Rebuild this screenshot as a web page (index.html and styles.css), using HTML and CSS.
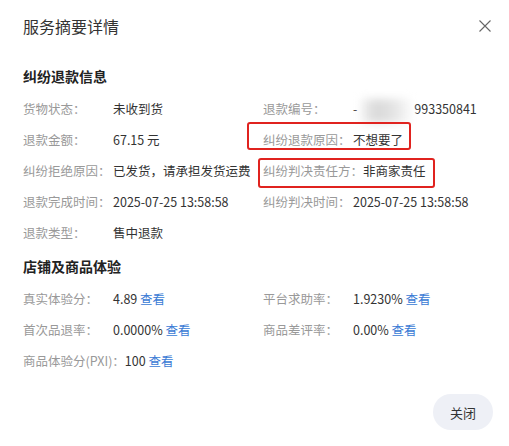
FILE: index.html
```html
<!DOCTYPE html>
<html lang="zh-CN">
<head>
  <meta charset="UTF-8">
  <title>服务摘要详情</title>
  <link rel="stylesheet" href="styles.css">
</head>
<body>
  <div class="dialog">
    <div class="dialog-header">
      <span class="dialog-title">服务摘要详情</span>
      <svg class="close-x" width="12" height="12" viewBox="0 0 12 12">
        <path d="M0.5 0.5 L11.5 11.5 M11.5 0.5 L0.5 11.5" stroke="#666" stroke-width="1.1" fill="none"/>
      </svg>
    </div>

    <h3 class="section-title first">纠纷退款信息</h3>
    <div class="info-grid">
      <div class="item"><span class="label">货物状态：</span><span class="value">未收到货</span></div>
      <div class="item"><span class="label">退款编号：</span><span class="value">-<span class="blur"></span>993350841</span></div>
      <div class="item"><span class="label">退款金额：</span><span class="value">67.15 元</span></div>
      <div class="item"><span class="mark mark-reason"></span><span class="label">纠纷退款原因：</span><span class="value">不想要了</span></div>
      <div class="item"><span class="label">纠纷拒绝原因：</span><span class="value">已发货，请承担发货运费</span></div>
      <div class="item"><span class="mark mark-duty"></span><span class="label">纠纷判决责任方：</span><span class="value">非商家责任</span></div>
      <div class="item"><span class="label">退款完成时间：</span><span class="value">2025-07-25 13:58:58</span></div>
      <div class="item"><span class="label">纠纷判决时间：</span><span class="value">2025-07-25 13:58:58</span></div>
      <div class="item"><span class="label">退款类型：</span><span class="value">售中退款</span></div>
    </div>

    <h3 class="section-title">店铺及商品体验</h3>
    <div class="info-grid">
      <div class="item"><span class="label">真实体验分：</span><span class="value">4.89 <a class="link">查看</a></span></div>
      <div class="item"><span class="label">平台求助率：</span><span class="value">1.9230% <a class="link">查看</a></span></div>
      <div class="item"><span class="label">首次品退率：</span><span class="value">0.0000% <a class="link">查看</a></span></div>
      <div class="item"><span class="label">商品差评率：</span><span class="value">0.00% <a class="link">查看</a></span></div>
      <div class="item"><span class="label">商品体验分(PXI)：</span><span class="value">100 <a class="link">查看</a></span></div>
    </div>

    <div class="dialog-footer">
      <button class="btn-close">关闭</button>
    </div>
  </div>
</body>
</html>
```

FILE: styles.css
```css
body {
  margin: 0;
  background: #fff;
  font-family: "Noto Sans CJK SC", "Liberation Sans", sans-serif;
  color: #333;
}
.dialog {
  padding: 0 16px 0 23px;
}
.dialog-header {
  display: flex;
  justify-content: space-between;
  align-items: center;
  padding-top: 16px;
  height: 20px;
}
.dialog-title {
  font-size: 16px;
  line-height: 20px;
  color: #333;
}
.close-x {
  margin-right: 2px;
}
.section-title {
  margin: 0;
  font-size: 14px;
  line-height: 20px;
  font-weight: bold;
  color: #222;
  padding-top: 8px;
}
.section-title.first {
  padding-top: 30px;
}
.info-grid {
  display: grid;
  grid-template-columns: 240px 240px;
  padding-top: 7px;
}
.item {
  position: relative;
  display: flex;
  font-size: 12.5px;
  line-height: 31px;
  white-space: nowrap;
}
.label {
  min-width: 90px;
  color: #999;
}
.value {
  color: #333;
}
.link {
  color: #3a7bd5;
}
.blur {
  display: inline-block;
  vertical-align: middle;
  width: 50px;
  height: 24px;
  margin: 0 3px 0 4px;
  background: linear-gradient(90deg, #f2f2f2 0%, #d9d9d9 30%, #e2e2e2 60%, #f0f0f0 85%, #fbfbfb 100%);
  filter: blur(4px);
}
.mark {
  position: absolute;
  border: 2px solid #e0231f;
  border-radius: 3px;
}
.mark-reason {
  left: -16px;
  top: -2px;
  width: 160px;
  height: 24px;
}
.mark-duty {
  left: -5px;
  top: 3px;
  width: 173px;
  height: 26px;
}
.dialog-footer {
  display: flex;
  justify-content: flex-end;
  padding-top: 18px;
}
.btn-close {
  width: 60px;
  height: 36px;
  border: none;
  border-radius: 18px;
  background: #eef0f6;
  color: #333;
  font-family: "Noto Sans CJK SC", sans-serif;
  font-size: 13px;
  cursor: pointer;
}
```
